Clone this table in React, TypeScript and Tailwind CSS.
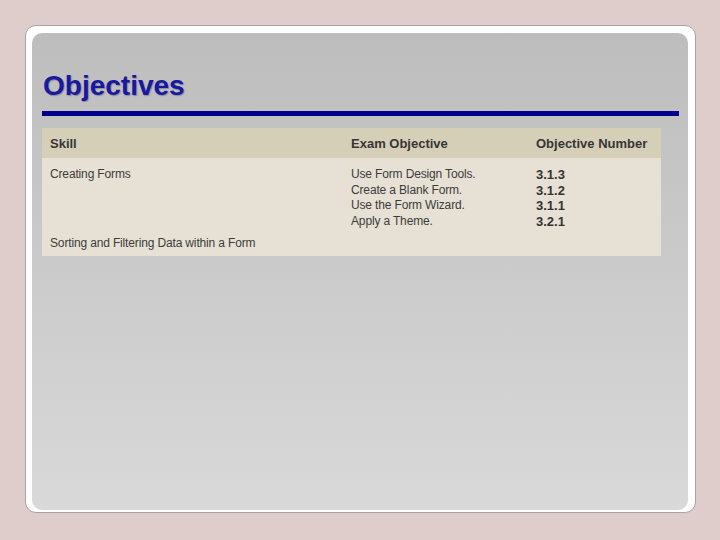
const rows = [
  { obj: "Use Form Design Tools.", num: "3.1.3" },
  { obj: "Create a Blank Form.", num: "3.1.2" },
  { obj: "Use the Form Wizard.", num: "3.1.1" },
  { obj: "Apply a Theme.", num: "3.2.1" },
];

const App = () => {
  return (
    <div className="w-[720px] h-[540px] bg-[#dfcdcb] pt-[25px] pl-[25px] font-['Liberation_Sans',Arial,sans-serif]">
      <div className="w-[671px] h-[488px] bg-white border border-[#a9a3a3] rounded-[11px] pt-[7px] pl-[6px] pr-[7px] pb-[2px]">
        <div className="h-full rounded-[10px] bg-gradient-to-b from-[#bdbdbd] to-[#d9d9d9] pt-[37px] pl-[10px] pr-[9px]">
          <h1 className="pl-px text-[28px] leading-[32px] font-bold text-[#1818a0] [text-shadow:1px_1px_1px_#8a8a99]">
            Objectives
          </h1>
          <div className="mt-[9px] h-[5px] bg-[#00008a]" />

          <div className="mt-[12px] w-[619px] text-[#333]">
            <div className="flex h-[30px] items-center bg-[#d6cfb7] pl-2 pt-[2px] text-[13px] font-bold text-[#363636]">
              <div className="w-[301px]">Skill</div>
              <div className="w-[185px]">Exam Objective</div>
              <div>Objective Number</div>
            </div>

            <div className="bg-[#e7e1d5] pl-2 pt-[9px] pb-[4px] text-[12px] leading-[15.5px] text-[#3c3c3c] tracking-[-0.15px]">
              <div className="flex">
                <div className="w-[301px]">Creating Forms</div>
                <div className="w-[185px]">
                  {rows.map((r) => (
                    <div key={r.num}>{r.obj}</div>
                  ))}
                </div>
                <div className="text-[13px] font-bold text-[#333] tracking-normal">
                  {rows.map((r) => (
                    <div key={r.num} className="leading-[15.5px]">{r.num}</div>
                  ))}
                </div>
              </div>
              <div className="mt-[7px]">Sorting and Filtering Data within a Form</div>
            </div>
          </div>
        </div>
      </div>
    </div>
  );
};

export default App;
